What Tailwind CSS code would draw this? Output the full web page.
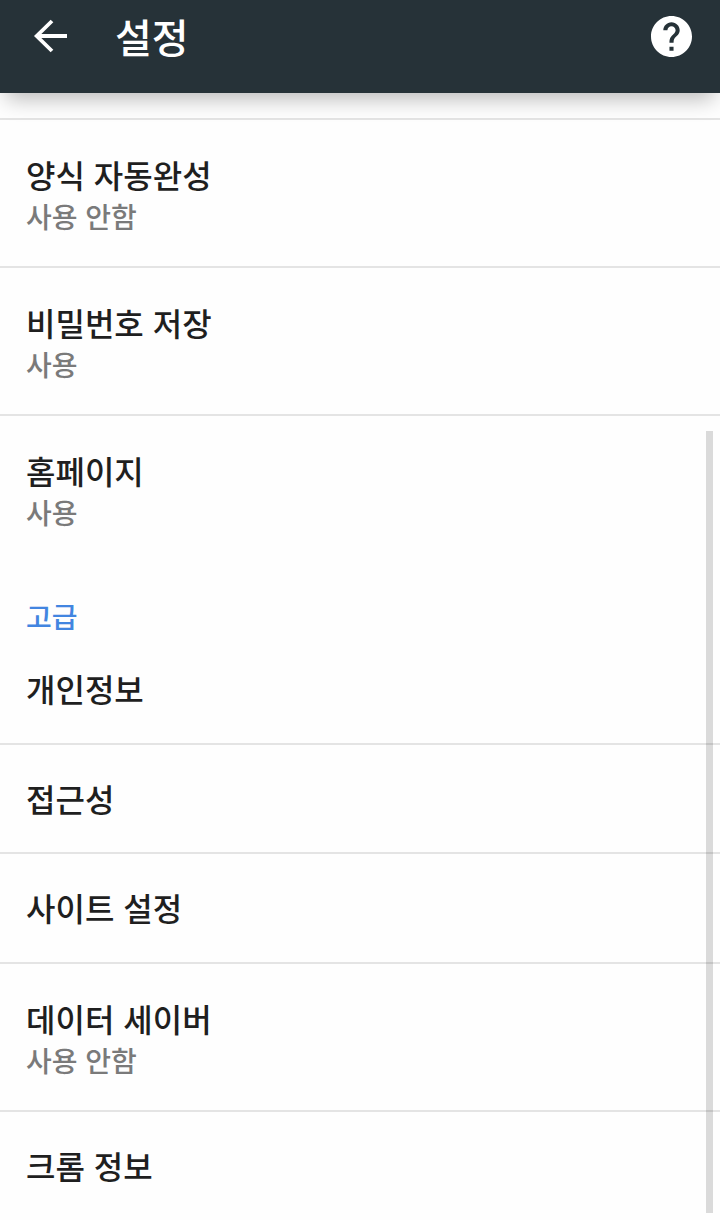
<!DOCTYPE html>
<html lang="ko">
<head>
<meta charset="utf-8">
<meta name="viewport" content="width=device-width, initial-scale=1">
<title>설정</title>
<script src="https://cdn.jsdelivr.net/npm/@tailwindcss/browser@4"></script>
</head>
<body class="relative min-h-screen bg-[#fefefe] font-['Noto_Sans_CJK_KR',sans-serif] font-medium text-[#1f1f1f]">
  <header class="relative flex h-[93px] items-center bg-[#263238] px-7 pb-[21px] text-white shadow-[0_12px_20px_-6px_rgba(0,0,0,0.27)]">
    <button type="button" aria-label="뒤로" class="flex size-11 items-center justify-center">
      <svg class="size-11" viewBox="0 0 44 44" fill="none" stroke="currentColor" stroke-width="3.8"><path d="M39 22H8.500M24 7L8.700 22L24 37"/></svg>
    </button>
    <h1 class="ml-[43px] flex-1 text-[40px] leading-[56px]">설정</h1>
    <button type="button" aria-label="도움말" class="flex size-[41px] items-center justify-center">
      <svg class="size-full" viewBox="2 2 20 20" fill="currentColor"><path d="M12 2C6.48 2 2 6.48 2 12s4.48 10 10 10 10-4.48 10-10S17.52 2 12 2zm1 17h-2v-2h2v2zm2.07-7.75l-.9.92C13.45 12.9 13 13.5 13 15h-2v-.5c0-1.1.45-2.1 1.17-2.83l1.24-1.26c.37-.36.59-.86.59-1.41 0-1.1-.9-2-2-2s-2 .9-2 2H8c0-2.21 1.79-4 4-4s4 1.79 4 4c0 .88-.36 1.68-.93 2.25z"/></svg>
    </button>
  </header>
  <main>
    <div class="h-[27px] border-b-2 border-[#e4e4e4]"></div>
    <section>
      <a href="#autofill" class="block border-b-2 border-[#e4e4e4] px-[26px] pt-8 pb-[31px]">
        <span class="block text-[32px] leading-[44px]">양식 자동완성</span>
        <span class="block pt-px text-[28px] leading-[38px] text-[#7a7a7a]">사용 안함</span>
      </a>
      <a href="#passwords" class="block border-b-2 border-[#e4e4e4] px-[26px] pt-8 pb-[31px]">
        <span class="block text-[32px] leading-[44px]">비밀번호 저장</span>
        <span class="block pt-px text-[28px] leading-[38px] text-[#7a7a7a]">사용</span>
      </a>
      <a href="#homepage" class="block px-[26px] pt-8 pb-[31px]">
        <span class="block text-[32px] leading-[44px]">홈페이지</span>
        <span class="block pt-px text-[28px] leading-[38px] text-[#7a7a7a]">사용</span>
      </a>
    </section>
    <section>
      <h2 class="px-[26px] pt-[35px] text-[28px] leading-[38px] text-[#4285e0]">고급</h2>
      <a href="#privacy" class="block border-b-2 border-[#e4e4e4] px-[26px] pt-[31px] pb-[33px]">
        <span class="block text-[32px] leading-[44px]">개인정보</span>
      </a>
      <a href="#accessibility" class="block border-b-2 border-[#e4e4e4] px-[26px] pt-[31px] pb-8">
        <span class="block text-[32px] leading-[44px]">접근성</span>
      </a>
      <a href="#site" class="block border-b-2 border-[#e4e4e4] px-[26px] pt-[31px] pb-[33px]">
        <span class="block text-[32px] leading-[44px]">사이트 설정</span>
      </a>
      <a href="#data-saver" class="block border-b-2 border-[#e4e4e4] px-[26px] pt-8 pb-[31px]">
        <span class="block text-[32px] leading-[44px]">데이터 세이버</span>
        <span class="block pt-px text-[28px] leading-[38px] text-[#7a7a7a]">사용 안함</span>
      </a>
      <a href="#about" class="block px-[26px] pt-[31px] pb-[33px]">
        <span class="block text-[32px] leading-[44px]">크롬 정보</span>
      </a>
    </section>
  </main>
  <div aria-hidden="true" class="absolute top-[431px] right-[7px] bottom-[7px] w-[7px] bg-black/14"></div>
</body>
</html>
